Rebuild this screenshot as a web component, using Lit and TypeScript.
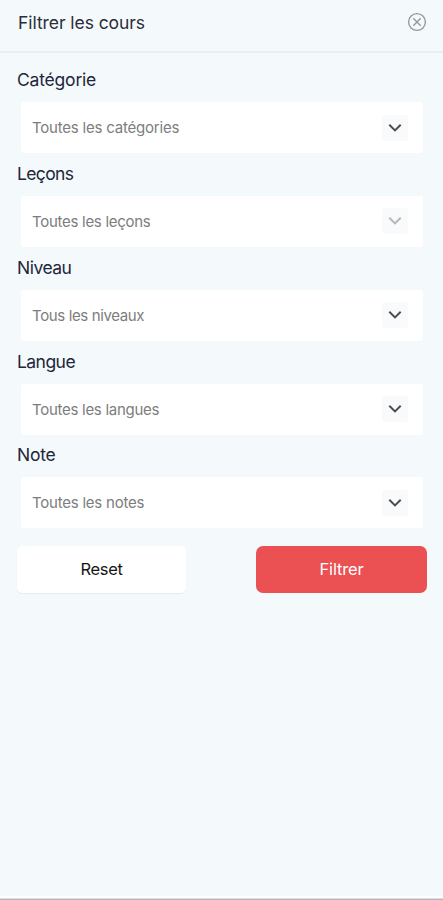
import { LitElement, html, css, svg } from "lit";
import { customElement, property } from "lit/decorators.js";
import { classMap } from "lit/directives/class-map.js";

interface Filter {
  label: string;
  placeholder: string;
  muted?: boolean;
  labelSpacing: number;
  spacing: number;
}

const FILTERS: Filter[] = [
  { label: "Catégorie", placeholder: "Toutes les catégories", labelSpacing: -0.2, spacing: -0.21 },
  { label: "Leçons", placeholder: "Toutes les leçons", muted: true, labelSpacing: -0.65, spacing: -0.28 },
  { label: "Niveau", placeholder: "Tous les niveaux", labelSpacing: -0.5, spacing: -0.37 },
  { label: "Langue", placeholder: "Toutes les langues", labelSpacing: -0.55, spacing: -0.28 },
  { label: "Note", placeholder: "Toutes les notes", labelSpacing: -0.25, spacing: -0.23 },
];

@customElement("filter-select")
export class FilterSelect extends LitElement {
  @property({ attribute: false }) filter!: Filter;

  static styles = css`
    :host { display: block; height: 93.85px; }
    .label {
      height: 36px;
      line-height: 36px;
      font-size: 17.5px;
      color: #23263a;
      white-space: nowrap;
    }
    .field {
      box-sizing: border-box;
      height: 51px;
      margin: 4px 4px 0;
      padding: 0 15px 0 11px;
      display: flex;
      align-items: center;
      justify-content: space-between;
      background: #fff;
      border-radius: 3px;
    }
    .value { font-size: 15px; color: #7d7d7d; white-space: nowrap; }
    .toggle {
      width: 26px;
      height: 26px;
      display: grid;
      place-items: center;
      border-radius: 3px;
      background: #f8fafb;
      color: #4a4c50;
    }
    .muted { color: #b4b8bc; }
    svg { display: block; }
  `;

  render() {
    const f = this.filter;
    return html`
      <div class="label" style="letter-spacing:${f.labelSpacing}px">${f.label}</div>
      <div class="field">
        <span class="value" style="letter-spacing:${f.spacing}px">${f.placeholder}</span>
        <span class=${classMap({ toggle: true, muted: !!f.muted })}>
          <svg width="14" height="10" viewBox="0 0 14 10" fill="none">
            <path d="M1.3 1.8 L7 7.4 L12.7 1.8" stroke="currentColor" stroke-width="2" />
          </svg>
        </span>
      </div>
    `;
  }
}

@customElement("app-root")
export class AppRoot extends LitElement {
  static styles = css`
    :host {
      display: flex;
      flex-direction: column;
      box-sizing: border-box;
      height: 900px;
      background: #f4f9fb;
      border-bottom: 1px solid #b5b7b8;
      font-family: Inter, "Liberation Sans", sans-serif;
      overflow: hidden;
    }
    .header {
      box-sizing: border-box;
      height: 53px;
      padding: 0 16px 7px 18px;
      display: flex;
      align-items: center;
      justify-content: space-between;
      border-bottom: 2px solid #ebeff0;
    }
    .title {
      font-size: 17.5px;
      letter-spacing: -0.06px;
      color: #2b2d3c;
      white-space: nowrap;
    }
    .body { padding: 9px 16px 0 17px; flex: 1; }
    .actions {
      display: flex;
      justify-content: space-between;
      margin-top: 14.75px;
    }
    .btn {
      font: inherit;
      font-size: 16.5px;
      height: 47px;
      padding: 0;
      border: 0;
      border-radius: 7px;
    }
    .reset {
      width: 169px;
      background: #fff;
      color: #151515;
      letter-spacing: -0.35px;
      border-radius: 5px;
      box-shadow: 0 1px 1px #e9eced;
    }
    .submit {
      width: 171px;
      background: #eb5052;
      color: #fff;
      letter-spacing: -0.15px;
    }
    .foot { height: 2px; background: #fcfdfd; border-bottom: 1px solid #dcdedf; }
  `;

  render() {
    return html`
      <div class="header">
        <span class="title">Filtrer les cours</span>
        <svg width="20" height="20" viewBox="0 0 20 20" fill="none" stroke="#96999b" stroke-width="1.4">
          ${svg`<circle cx="10" cy="10" r="8.4" /><path d="M6.3 6.3 L13.7 13.7 M13.7 6.3 L6.3 13.7" />`}
        </svg>
      </div>
      <div class="body">
        ${FILTERS.map((f) => html`<filter-select .filter=${f}></filter-select>`)}
        <div class="actions">
          <button class="btn reset">Reset</button>
          <button class="btn submit">Filtrer</button>
        </div>
      </div>
      <div class="foot"></div>
    `;
  }
}
